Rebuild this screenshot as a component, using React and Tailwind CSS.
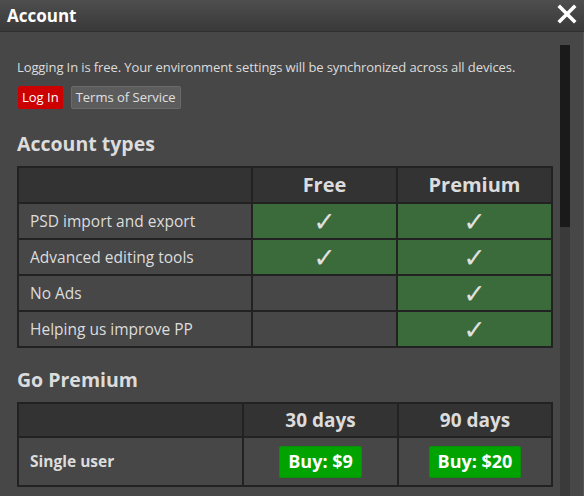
const FEATURES = [
  { name: 'PSD import and export', free: true },
  { name: 'Advanced editing tools', free: true },
  { name: 'No Ads', free: false },
  { name: 'Helping us improve PP', free: false },
];

function Check() {
  return (
    <span
      className="text-[27px] leading-none text-[#e0e0e0]"
      style={{ fontFamily: '"DejaVu Sans", sans-serif' }}
    >
      ✓
    </span>
  );
}

export default function App() {
  return (
    <div
      className="w-[584px] h-[496px] bg-[#474747] overflow-hidden flex flex-col text-[#dcdcdc]"
      style={{ fontFamily: '"Open Sans", sans-serif' }}
    >
      <div className="h-[32px] shrink-0 flex items-center justify-between pl-[7px] pr-[7px] bg-gradient-to-b from-[#4e4e4e] to-[#393939] border-b border-[#2f2f2f]">
        <span className="text-[17px] font-bold text-white">Account</span>
        <svg width="20" height="20" viewBox="0 0 20 20" className="mb-[4px]">
          <path d="M3 3 L17 17 M17 3 L3 17" stroke="#fff" strokeWidth="3.6" strokeLinecap="square" />
        </svg>
      </div>

      <div className="flex-1 flex overflow-hidden">
        <div className="w-[553px] shrink-0 pl-[17px] pt-[27px]">
          <p className="text-[13px] leading-[16px] text-[#dcdcdc] tracking-[-0.1px]">
            Logging In is free. Your environment settings will be synchronized across all devices.
          </p>
          <div className="flex gap-[8px] mt-[11px] ml-[1px]">
            <button className="h-[23px] px-[4px] bg-[#cc0000] text-white text-[13px] rounded-[2px]">Log In</button>
            <button className="h-[23px] px-[4px] bg-[#5c5c5c] border border-[#6a6a6a] text-[#e0e0e0] text-[13px] rounded-[2px]">
              Terms of Service
            </button>
          </div>

          <h2 className="mt-[22px] text-[19.5px] font-bold leading-[26px] text-[#dcdcdc]">Account types</h2>
          <div className="mt-[9px] grid grid-cols-[232px_143px_153px] gap-[2px] p-[2px] bg-[#222]">
            <div className="h-[34px] bg-[#333]" />
            <div className="h-[34px] bg-[#333] flex items-center justify-center text-[20px] font-bold">Free</div>
            <div className="h-[34px] bg-[#333] flex items-center justify-center text-[20px] font-bold">Premium</div>
            {FEATURES.map((f) => (
              <FeatureRow key={f.name} {...f} />
            ))}
          </div>

          <h2 className="mt-[19px] text-[19.5px] font-bold leading-[26px] text-[#dcdcdc]">Go Premium</h2>
          <div className="mt-[9px] grid grid-cols-[223px_153px_152px] gap-[2px] p-[2px] bg-[#222]">
            <div className="h-[32px] bg-[#333]" />
            <div className="h-[32px] bg-[#333] flex items-center justify-center text-[19px] font-bold">30 days</div>
            <div className="h-[32px] bg-[#333] flex items-center justify-center text-[19px] font-bold">90 days</div>
            <div className="h-[47px] bg-[#474747] flex items-center pl-[11px] text-[15.5px] font-bold">Single user</div>
            <div className="h-[47px] bg-[#474747] flex items-center justify-center">
              <BuyButton label="Buy: $9" />
            </div>
            <div className="h-[47px] bg-[#474747] flex items-center justify-center">
              <BuyButton label="Buy: $20" />
            </div>
          </div>
        </div>

        <div className="ml-[7px] mt-[13px] w-[10px] flex flex-col">
          <div className="h-[182px] bg-[#1a1a1a]" />
          <div className="flex-1 bg-[#3a3a3a]" />
        </div>
        <div className="flex-1" />
        <div className="w-[1px] bg-[#555]" />
      </div>
    </div>
  );
}

function FeatureRow({ name, free }) {
  return (
    <>
      <div className="h-[34px] bg-[#474747] flex items-center pl-[11px] pt-[1px] text-[15.5px]">{name}</div>
      <div className={`h-[34px] flex items-center justify-center ${free ? 'bg-[#3b6b3b]' : 'bg-[#474747]'}`}>
        {free && <Check />}
      </div>
      <div className="h-[34px] bg-[#3b6b3b] flex items-center justify-center">
        <Check />
      </div>
    </>
  );
}

function BuyButton({ label }) {
  return (
    <button className="h-[32px] px-[8px] bg-[#00a300] border border-[#0b8f0b] rounded-[2px] text-white text-[18px] font-bold">
      {label}
    </button>
  );
}
